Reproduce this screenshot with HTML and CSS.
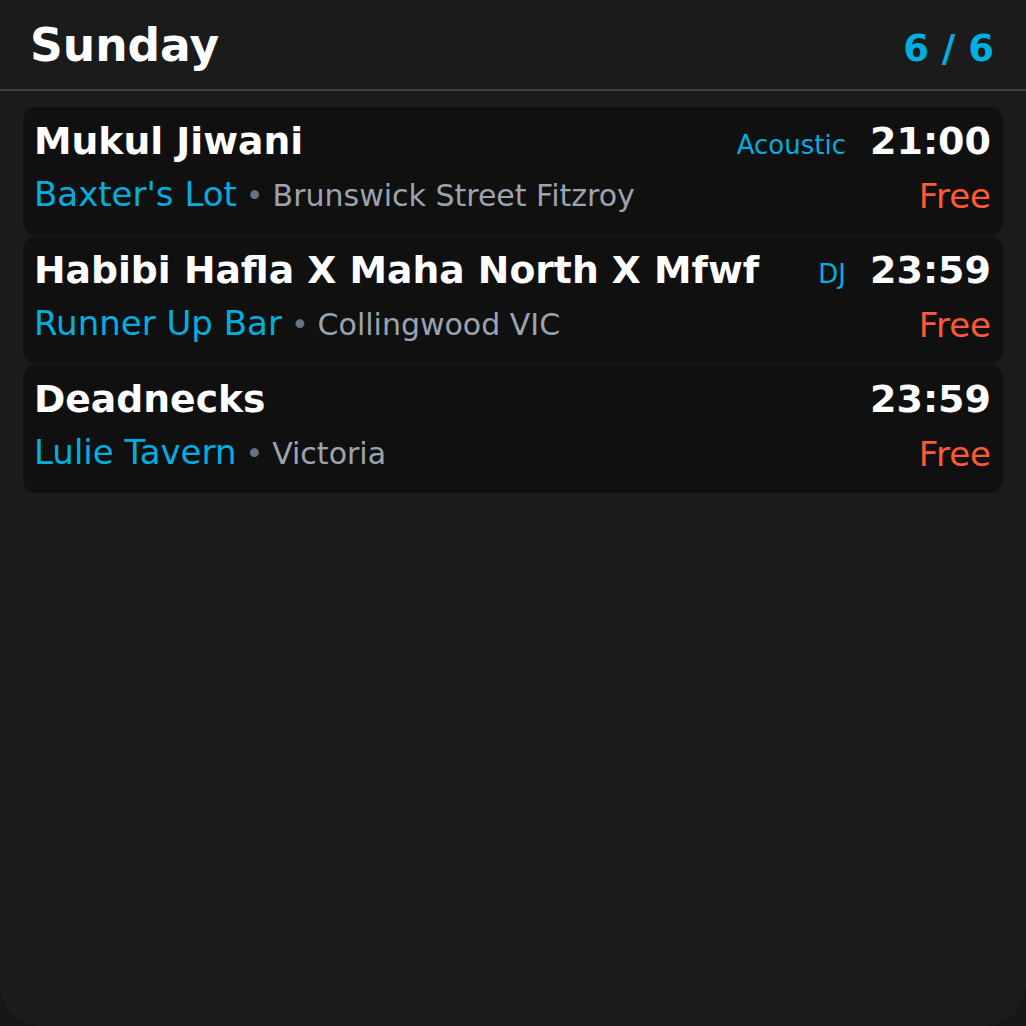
FILE: index.html
```html
<!DOCTYPE html>
<html>
<head>
<meta charset="utf-8">
<link rel="stylesheet" href="styles.css">
</head>
<body>
<div class="screen">
  <header class="header">
    <h1 class="day">Sunday</h1>
    <span class="count">6 / 6</span>
  </header>
  <div class="list">
    <div class="card">
      <div class="row">
        <span class="title">Mukul Jiwani</span>
        <span class="right"><span class="genre">Acoustic</span><span class="time">21:00</span></span>
      </div>
      <div class="row row2">
        <span class="place"><span class="venue">Baxter's Lot</span><span class="dot">•</span><span class="loc">Brunswick Street Fitzroy</span></span>
        <span class="price">Free</span>
      </div>
    </div>
    <div class="card">
      <div class="row">
        <span class="title">Habibi Hafla X Maha North X Mfwf</span>
        <span class="right"><span class="genre">DJ</span><span class="time">23:59</span></span>
      </div>
      <div class="row row2">
        <span class="place"><span class="venue">Runner Up Bar</span><span class="dot">•</span><span class="loc">Collingwood VIC</span></span>
        <span class="price">Free</span>
      </div>
    </div>
    <div class="card">
      <div class="row">
        <span class="title">Deadnecks</span>
        <span class="right"><span class="time">23:59</span></span>
      </div>
      <div class="row row2">
        <span class="place"><span class="venue">Lulie Tavern</span><span class="dot">•</span><span class="loc">Victoria</span></span>
        <span class="price">Free</span>
      </div>
    </div>
  </div>
</div>
</body>
</html>
```
FILE: styles.css
```css
html, body {
  margin: 0;
  padding: 0;
  background: #161616;
}
body {
  font-family: "DejaVu Sans", "Noto Sans", sans-serif;
  color: #fff;
}
.screen {
  width: 1026px;
  height: 1026px;
  background: #1b1b1b;
  border-radius: 0 0 40px 40px;
  overflow: hidden;
  box-sizing: border-box;
}
.header {
  display: flex;
  justify-content: space-between;
  align-items: baseline;
  padding: 17px 32px 0 30px;
  height: 91px;
  box-sizing: border-box;
  border-bottom: 2px solid #3a404b;
}
.day {
  margin: 0;
  font-size: 45.5px;
  font-weight: bold;
  line-height: 58px;
}
.count {
  font-size: 37px;
  font-weight: bold;
  color: #00aedf;
  line-height: 58px;
}
.list {
  display: flex;
  flex-direction: column;
  gap: 1px;
  padding: 16px 23px 0 23px;
}
.card {
  background: #101010;
  border-radius: 14px;
  height: 128px;
  box-sizing: border-box;
  padding: 12px 12px 0 11px;
}
.row {
  display: flex;
  justify-content: space-between;
  align-items: baseline;
  height: 44px;
}
.row2 {
  margin-top: 10px;
  height: 40px;
}
.title {
  font-size: 37.7px;
  font-weight: bold;
  line-height: 44px;
  white-space: nowrap;
}
.right {
  display: flex;
  align-items: baseline;
}
.genre {
  font-size: 26px;
  color: #00aedf;
  margin-right: 24px;
}
.time {
  font-size: 38px;
  font-weight: bold;
  line-height: 44px;
}
.place {
  font-size: 30px;
  line-height: 40px;
  white-space: nowrap;
  position: relative;
  top: 1px;
}
.venue {
  font-size: 34px;
  color: #00aedf;
}
.dot {
  color: #6b7280;
  margin: 0 9px 0 9px;
}
.loc {
  color: #9ca3af;
}
.price {
  font-size: 34px;
  line-height: 40px;
  color: #ff5a35;
  position: relative;
  top: 3px;
}
```
